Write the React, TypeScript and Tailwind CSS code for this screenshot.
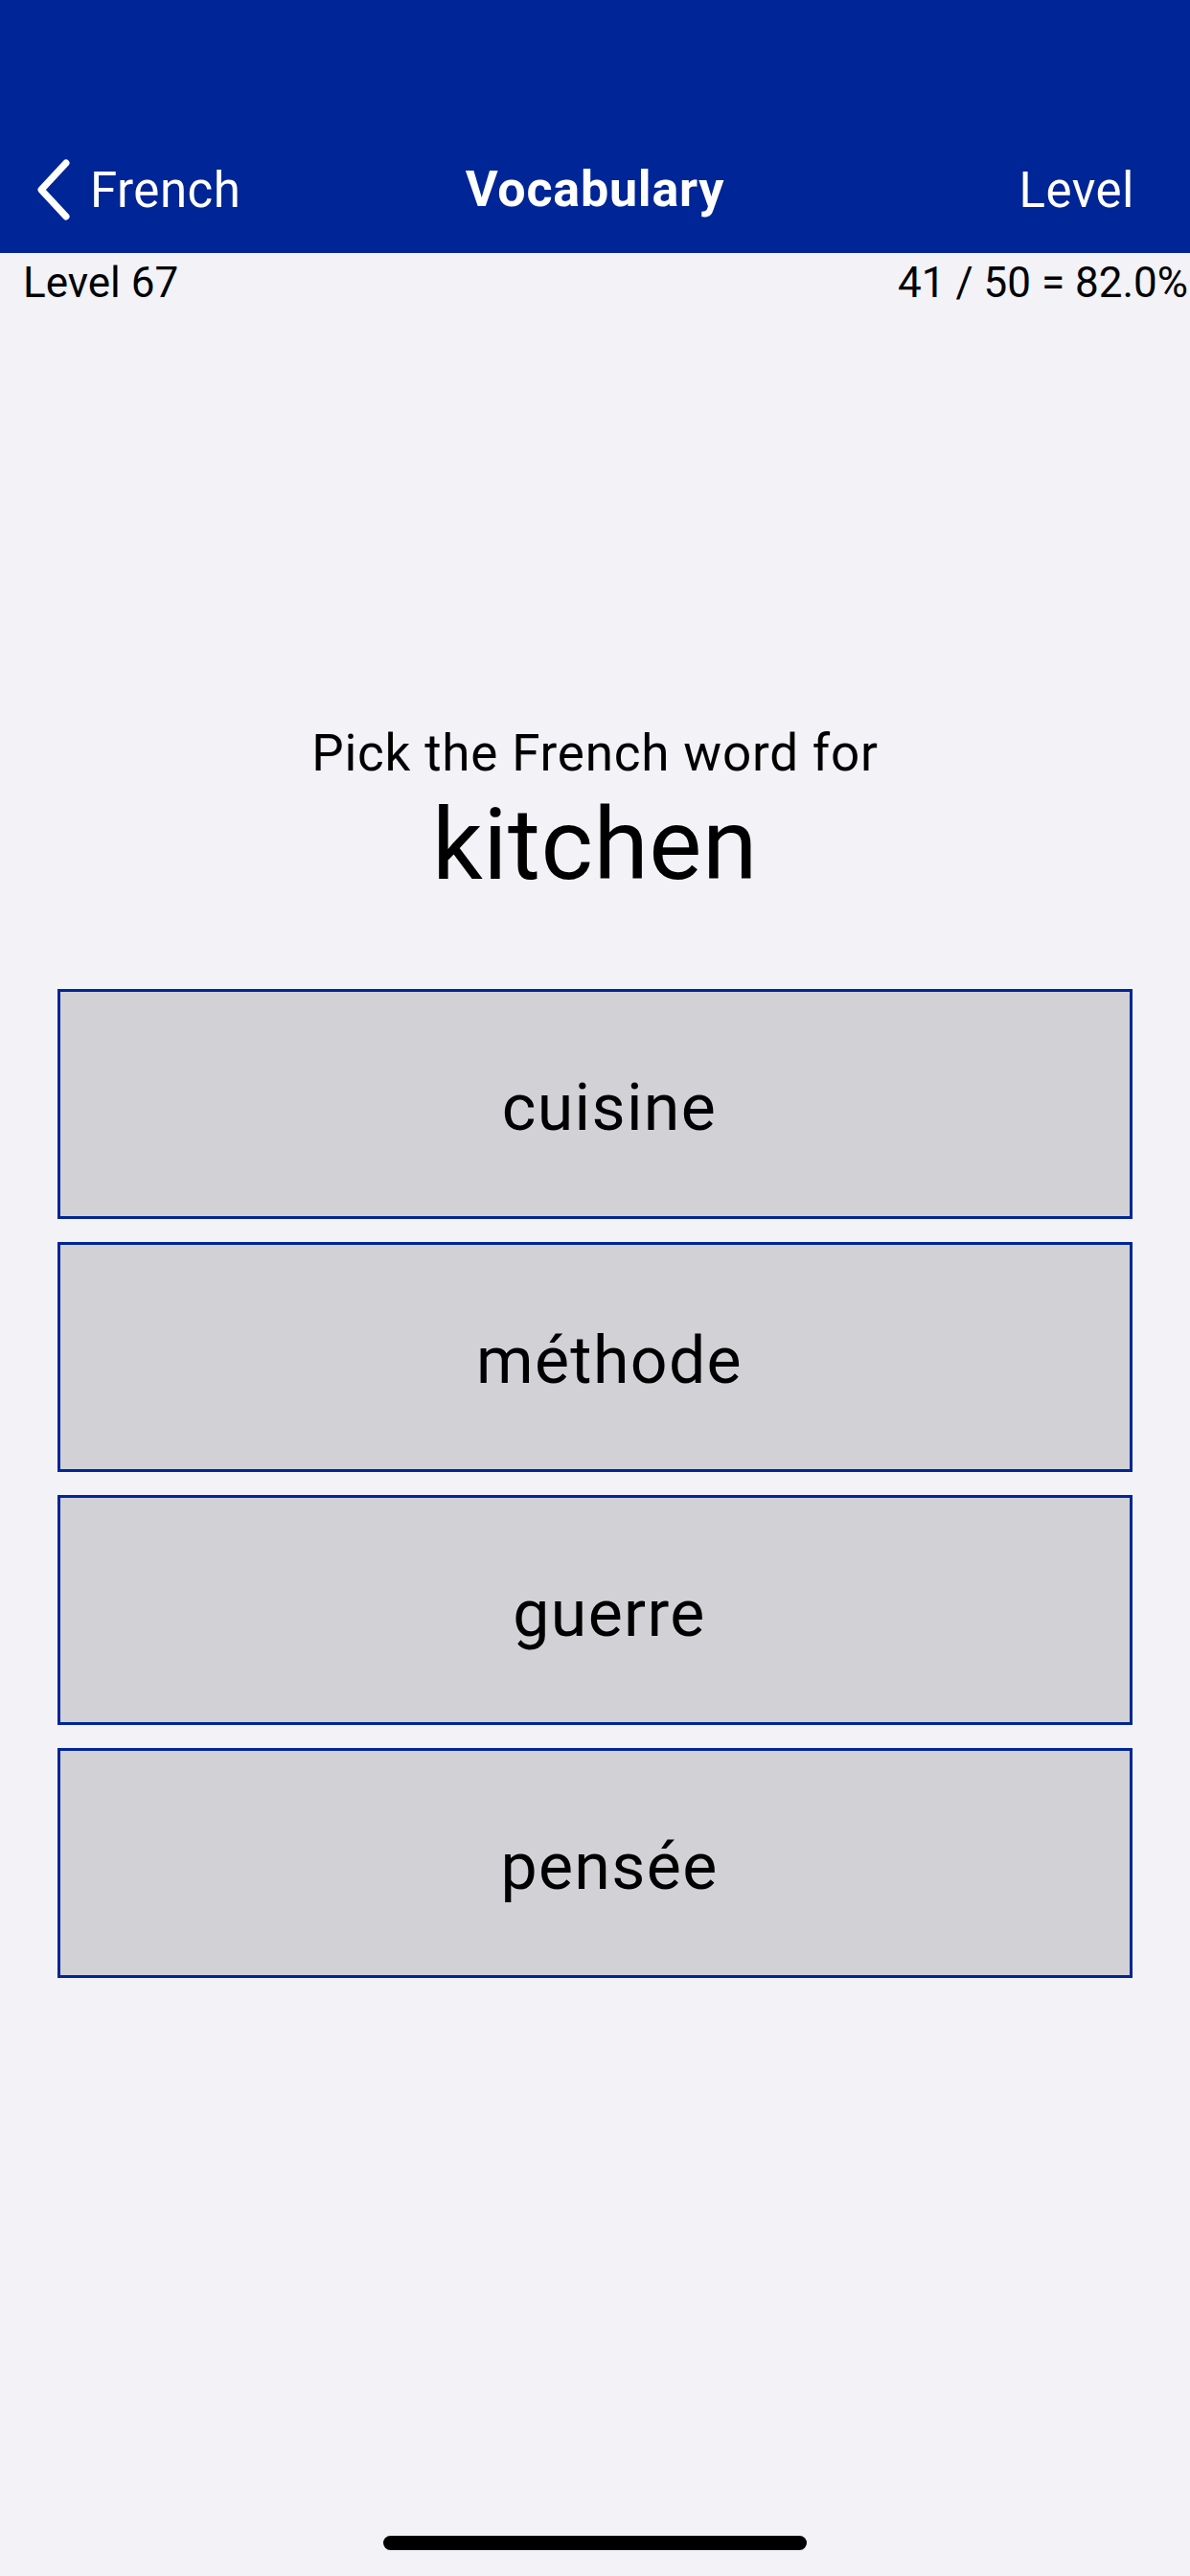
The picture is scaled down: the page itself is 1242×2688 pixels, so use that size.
const choices = ["cuisine", "méthode", "guerre", "pensée"];

function Chevron() {
  return (
    <svg width="40" height="66" viewBox="0 0 40 66" fill="none" className="shrink-0">
      <polyline
        points="33,5 7,33 33,61"
        stroke="white"
        strokeWidth="7"
        strokeLinecap="round"
        strokeLinejoin="round"
      />
    </svg>
  );
}

export default function App() {
  return (
    <div
      className="relative flex min-h-[2688px] w-[1242px] flex-col overflow-hidden bg-[#f2f2f7] text-black"
      style={{ fontFamily: "Roboto, 'Noto Sans', sans-serif" }}
    >
      {/* шапка: статус-бар + навбар */}
      <header className="h-[264px] bg-[#002596] pt-[132px] text-white">
        <div className="relative flex h-[132px] items-center justify-between pl-[36px] pr-[58px]">
          <div className="flex items-center gap-[18px]">
            <Chevron />
            <span className="text-[51px] leading-none tracking-[0.01em]">French</span>
          </div>
          <span className="absolute left-1/2 -translate-x-1/2 text-[52px] font-bold leading-none tracking-[0.015em]">
            Vocabulary
          </span>
          <span className="text-[51px] leading-none tracking-[0.01em]">Level</span>
        </div>
      </header>

      <div className="flex h-[62px] items-center justify-between pl-[24px] pr-[2px] text-[44px] leading-none">
        <span>Level 67</span>
        <span>41 / 50 = 82.0%</span>
      </div>

      <div className="mt-[430px] flex flex-col items-center">
        <p className="text-[53px] leading-[60px] tracking-[0.015em]">Pick the French word for</p>
        <p className="mt-[6px] text-[104px] leading-[120px] tracking-[0.005em]">kitchen</p>
      </div>

      <div className="mt-[90px] flex flex-col gap-[24px] px-[60px]">
        {choices.map((c) => (
          <button
            key={c}
            className="flex h-[240px] w-full items-center justify-center border-[3px] border-[#002596] bg-[#d1d1d6] pl-[30px] pt-[8px] text-[68px] leading-none tracking-[0.02em]"
          >
            {c}
          </button>
        ))}
      </div>

      <div className="absolute bottom-[27px] left-1/2 h-[15px] w-[442px] -translate-x-1/2 rounded-full bg-black" />
    </div>
  );
}
